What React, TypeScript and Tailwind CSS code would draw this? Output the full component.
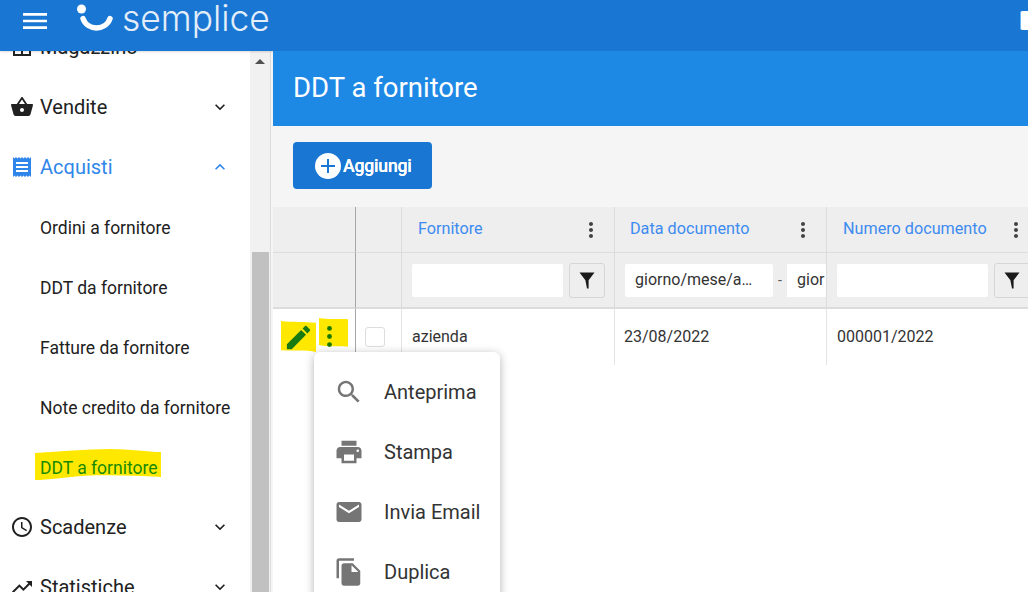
import React from "react";

const P: Record<string, string> = {
  menu: "M3 18h18v-2H3v2zm0-5h18v-2H3v2zm0-7v2h18V6H3z",
  basket: "M17.21 9l-4.38-6.56c-.19-.28-.51-.42-.83-.42-.32 0-.64.14-.83.43L6.79 9H2c-.55 0-1 .45-1 1 0 .09.01.18.04.27l2.54 9.27c.23.84 1 1.46 1.92 1.46h13c.92 0 1.69-.62 1.93-1.46l2.54-9.27L23 10c0-.55-.45-1-1-1h-4.79zM9 9l3-4.4L15 9H9zm3 8c-1.1 0-2-.9-2-2s.9-2 2-2 2 .9 2 2-.9 2-2 2z",
  receipt: "M18 17H6v-2h12v2zm0-4H6v-2h12v2zm0-4H6V7h12v2zM3 22l1.5-1.5L6 22l1.5-1.5L9 22l1.5-1.5L12 22l1.5-1.5L15 22l1.5-1.5L18 22l1.5-1.5L21 22V2l-1.5 1.5L18 2l-1.5 1.5L15 2l-1.5 1.5L12 2l-1.5 1.5L9 2 7.5 3.5 6 2 4.5 3.5 3 2v20z",
  clock: "M11.99 2C6.47 2 2 6.48 2 12s4.47 10 9.99 10C17.52 22 22 17.52 22 12S17.52 2 11.99 2zM12 20c-4.42 0-8-3.58-8-8s3.58-8 8-8 8 3.58 8 8-3.58 8-8 8zm.5-13H11v6l5.25 3.15.75-1.23-4.5-2.67z",
  trend: "M16 6l2.29 2.29-4.88 4.88-4-4L2 16.59 3.41 18l6-6 4 4 6.3-6.29L22 12V6z",
  store: "M3 3h18v18H3V3zm2 2v4h14V5H5zm0 6v8h6v-8H5zm8 0v8h6v-8h-6z",
  down: "M16.59 8.59L12 13.17 7.41 8.59 6 10l6 6 6-6z",
  up: "M12 8l-6 6 1.41 1.41L12 10.83l4.59 4.58L18 14z",
  dots: "M12 8c1.1 0 2-.9 2-2s-.9-2-2-2-2 .9-2 2 .9 2 2 2zm0 2c-1.1 0-2 .9-2 2s.9 2 2 2 2-.9 2-2-.9-2-2-2zm0 6c-1.1 0-2 .9-2 2s.9 2 2 2 2-.9 2-2-.9-2-2-2z",
  edit: "M3 17.25V21h3.75L17.81 9.94l-3.75-3.75L3 17.25zM20.71 7.04c.39-.39.39-1.02 0-1.41l-2.34-2.34c-.39-.39-1.02-.39-1.41 0l-1.83 1.83 3.75 3.75 1.83-1.83z",
  search: "M15.5 14h-.79l-.28-.27C15.41 12.59 16 11.11 16 9.5 16 5.91 13.09 3 9.5 3S3 5.91 3 9.5 5.91 16 9.5 16c1.61 0 3.09-.59 4.23-1.57l.27.28v.79l5 4.99L20.49 19l-4.99-5zm-6 0C7.01 14 5 11.99 5 9.5S7.01 5 9.5 5 14 7.01 14 9.5 11.99 14 9.5 14z",
  print: "M19 8H5c-1.66 0-3 1.34-3 3v6h4v4h12v-4h4v-6c0-1.66-1.34-3-3-3zm-3 11H8v-5h8v5zm3-7c-.55 0-1-.45-1-1s.45-1 1-1 1 .45 1 1-.45 1-1 1zm-1-9H6v4h12V3z",
  mail: "M20 4H4c-1.1 0-1.99.9-1.99 2L2 18c0 1.1.9 2 2 2h16c1.1 0 2-.9 2-2V6c0-1.1-.9-2-2-2zm0 4l-8 5-8-5V6l8 5 8-5v2z",
  copy: "M16 1H4c-1.1 0-2 .9-2 2v14h2V3h12V1zm-1 4l6 6v10c0 1.1-.9 2-2 2H7.99C6.89 23 6 22.1 6 21l.01-14c0-1.1.89-2 1.99-2h7zm-1 7h5.5L14 6.5V12z",
};

function Icon({ d, className }: { d: string; className: string }) {
  return (
    <svg viewBox="0 0 24 24" fill="currentColor" className={className}>
      <path d={P[d]} />
    </svg>
  );
}

function Funnel() {
  return (
    <svg viewBox="0 0 16 17" fill="#1a1a1a" className="h-[17px] w-[16px]">
      <path d="M0.5 0.5h15L9.6 8.2V16.5H8L6.4 8.2z" />
    </svg>
  );
}

function Mark({ className, d }: { className: string; d: string }) {
  return (
    <svg className={className} viewBox="0 0 100 100" preserveAspectRatio="none">
      <path d={d} fill="#ffe800" />
    </svg>
  );
}

function NavItem({ icon, label, arrow, active }: { icon: string; label: string; arrow: string; active?: boolean }) {
  return (
    <div className={`flex h-[60px] items-center pl-[10px] pr-5 ${active ? "text-[#2f86ea]" : "text-[#212121]"}`}>
      <Icon d={icon} className="h-6 w-6 shrink-0" />
      <span className="ml-[6px] flex-1 text-[20px] leading-none">{label}</span>
      <Icon d={arrow} className="h-5 w-5 shrink-0" />
    </div>
  );
}

function SubItem({ label }: { label: string }) {
  return <div className="flex h-[60px] items-center pl-10 pt-[2px] text-[17.5px] text-[#212121]">{label}</div>;
}

function HeadCell({ label, pad }: { label: string; pad: string }) {
  return (
    <div className={`flex items-center justify-between border-r border-b border-[#dcdcdc] bg-[#eeeeee] pr-[12px] ${pad}`}>
      <span className="text-[16.2px] text-[#3d8bf0]">{label}</span>
      <Icon d="dots" className="-mr-[1px] h-6 w-6 text-[#424242]" />
    </div>
  );
}

function FilterButton() {
  return (
    <div className="flex h-[35px] w-[36px] shrink-0 items-center justify-center rounded-[3px] border border-[#d6d6d6] bg-[#eeeeee]">
      <Funnel />
    </div>
  );
}

function MenuRow({ icon, label }: { icon: string; label: string }) {
  return (
    <div className="flex h-[60px] shrink-0 items-center pl-[20px]">
      <Icon d={icon} className="h-[30px] w-[30px] text-[#757575]" />
      <span className="ml-[20px] text-[20px] text-[#333333]">{label}</span>
    </div>
  );
}

export default function App() {
  return (
    <div className="flex h-[592px] w-[1028px] flex-col overflow-hidden bg-white font-['Roboto',sans-serif]">
      <header className="relative flex h-[51px] shrink-0 items-start bg-[#1976d2] shadow-[0_1px_2px_rgba(0,0,0,0.15)]">
        <Icon d="menu" className="ml-[19px] mt-[5px] h-8 w-8 text-white" />
        <svg viewBox="0 0 36 28" className="ml-[26px] mt-[4px] h-[28px] w-[36px]" fill="none">
          <circle cx="4.5" cy="5" r="4.5" fill="#fff" />
          <path d="M6 14.5 C10 27 29 27 33 14.5" stroke="#fff" strokeWidth="5.5" strokeLinecap="round" />
        </svg>
        <span className="ml-[9px] mt-0 text-[35.4px] font-light leading-[38px] text-[#e3eef9] font-['Inter',sans-serif]">semplice</span>
        <div className="absolute left-[1020px] top-[11px] h-[19px] w-[20px] rounded-[2px] border-l border-[#64b5f6] bg-white" />
      </header>
      <div className="flex min-h-0 flex-1">
        <aside className="flex w-[250px] shrink-0 flex-col overflow-hidden bg-white">
          <div className="-mt-[34px]">
            <NavItem icon="store" label="Magazzino" arrow="down" />
            <NavItem icon="basket" label="Vendite" arrow="down" />
            <NavItem icon="receipt" label="Acquisti" arrow="up" active />
            <SubItem label="Ordini a fornitore" />
            <SubItem label="DDT da fornitore" />
            <SubItem label="Fatture da fornitore" />
            <SubItem label="Note credito da fornitore" />
            <div className="relative flex h-[60px] items-center pl-10 pt-[2px] text-[17.5px] text-[#178a00]">
              <Mark className="absolute left-[35px] top-[12px] h-[31px] w-[126px]" d="M0 13 C20 8 40 0 60 0 C75 0 90 10 100 10 L100 90 C80 86 60 82 40 86 C25 90 10 100 0 100 Z" />
              <span className="relative">DDT a fornitore</span>
            </div>
            <NavItem icon="clock" label="Scadenze" arrow="down" />
            <NavItem icon="trend" label="Statistiche" arrow="down" />
          </div>
        </aside>
        <div className="flex w-[20px] shrink-0 flex-col bg-[#f1f1f1] pt-[8px]">
          <div className="mx-auto h-0 w-0 border-x-[5px] border-b-[5px] border-x-transparent border-b-[#505050]" />
          <div className="ml-[2px] mt-[188px] w-[17px] flex-1 bg-[#c1c1c1]" />
        </div>
        <div className="w-[3px] shrink-0 border-l border-[#dddddd] bg-[#f5f5f5]" />
        <main className="relative flex min-w-0 flex-1 flex-col bg-white">
          <div className="flex h-[75px] shrink-0 items-center bg-[#1e88e5] pb-[2px] pl-5 text-[27.5px] text-white">DDT a fornitore</div>
          <div className="flex h-[81px] shrink-0 items-start bg-[#f5f5f5] pl-5 pt-4">
            <button className="flex h-[47px] w-[139px] items-center rounded-[4px] bg-[#1976d2] pl-[22px] text-[17.6px] font-medium text-white">
              <span className="flex h-[26px] w-[26px] items-center justify-center rounded-full bg-white">
                <svg viewBox="0 0 14 14" className="h-[14px] w-[14px]" fill="#1976d2"><path d="M6 0h2v6h6v2H8v6H6V8H0V6h6z" /></svg>
              </span>
              <span className="ml-[2px] pt-[2px] tracking-[-0.2px] [text-shadow:0_0_0.4px_#fff]">Aggiungi</span>
            </button>
          </div>
          <div className="grid grid-cols-[83px_46px_213px_212px_240px] grid-rows-[46px_56px_56px]">
            <div className="border-r border-b border-r-[#a6a6a6] border-b-[#dcdcdc] bg-[#eeeeee]" />
            <div className="border-r border-b border-[#dcdcdc] bg-[#eeeeee]" />
            <HeadCell label="Fornitore" pad="pl-4" />
            <HeadCell label="Data documento" pad="pl-[15px]" />
            <div className="flex items-center border-b border-[#dcdcdc] bg-[#eeeeee] pl-4">
              <span className="text-[16.2px] text-[#3d8bf0]">Numero documento</span>
              <Icon d="dots" className="ml-[17px] h-6 w-6 text-[#424242]" />
            </div>

            <div className="border-r border-b-2 border-r-[#a6a6a6] border-b-[#dcdcdc] bg-[#eeeeee]" />
            <div className="border-r border-b-2 border-[#dcdcdc] bg-[#eeeeee]" />
            <div className="flex items-center gap-[6px] border-r border-b-2 border-[#dcdcdc] bg-[#eeeeee] pl-[10px]">
              <div className="h-[33px] w-[151px] rounded-[2px] bg-white" />
              <FilterButton />
            </div>
            <div className="flex items-center overflow-hidden border-r border-b-2 border-[#dcdcdc] bg-[#eeeeee] pl-[10px]">
              <div className="flex h-[33px] w-[148px] shrink-0 items-center rounded-[2px] bg-white pl-[10px] text-[16px] text-[#333333]">giorno/mese/a…</div>
              <span className="w-[14px] shrink-0 text-center text-[14px] text-[#555555]">-</span>
              <div className="flex h-[33px] w-[40px] shrink-0 items-center overflow-hidden bg-white pl-[10px] text-[16px] text-[#333333]">gior</div>
            </div>
            <div className="flex items-center gap-[6px] border-b-2 border-[#dcdcdc] bg-[#eeeeee] pl-[10px]">
              <div className="h-[33px] w-[151px] shrink-0 rounded-[2px] bg-white" />
              <FilterButton />
            </div>

            <div className="relative flex items-start border-r border-r-[#a6a6a6] bg-white">
              <Mark className="absolute left-[8px] top-[12px] h-[31px] w-[35px]" d="M0 0 C30 4 70 2 100 6 L100 100 C70 92 30 98 0 94 Z" />
              <Mark className="absolute left-[46px] top-[9px] h-[30px] w-[29px]" d="M0 0 C30 6 70 2 100 4 L100 96 C70 92 30 98 0 90 Z" />
              <Icon d="edit" className="absolute left-[10px] top-[13px] h-[31px] w-[31px] text-[#1a7a12]" />
              <svg viewBox="0 0 6 26" className="absolute left-[54px] top-[17px] h-[21px] w-[5px]" fill="#1a7a00">
                <circle cx="3" cy="3" r="3" /><circle cx="3" cy="13" r="3" /><circle cx="3" cy="23" r="3" />
              </svg>
            </div>
            <div className="flex items-center border-r border-[#e5e5e5] bg-white pl-[9px]">
              <div className="h-5 w-5 rounded-[3px] border border-[#dddddd] bg-white" />
            </div>
            <div className="flex items-center border-r border-[#e5e5e5] pl-[10px] text-[16px] text-[#333333]">azienda</div>
            <div className="flex items-center border-r border-[#e5e5e5] pl-[9px] text-[16px] text-[#333333]">23/08/2022</div>
            <div className="flex items-center pl-[10px] text-[16px] text-[#333333]">000001/2022</div>
          </div>

          <div className="absolute left-[41px] top-[301px] flex h-[300px] w-[186px] flex-col overflow-hidden rounded-[6px] bg-white shadow-[0_2px_10px_rgba(0,0,0,0.3)]">
            <div className="h-[10px] shrink-0" />
            <MenuRow icon="search" label="Anteprima" />
            <MenuRow icon="print" label="Stampa" />
            <MenuRow icon="mail" label="Invia Email" />
            <MenuRow icon="copy" label="Duplica" />
          </div>
        </main>
      </div>
    </div>
  );
}
